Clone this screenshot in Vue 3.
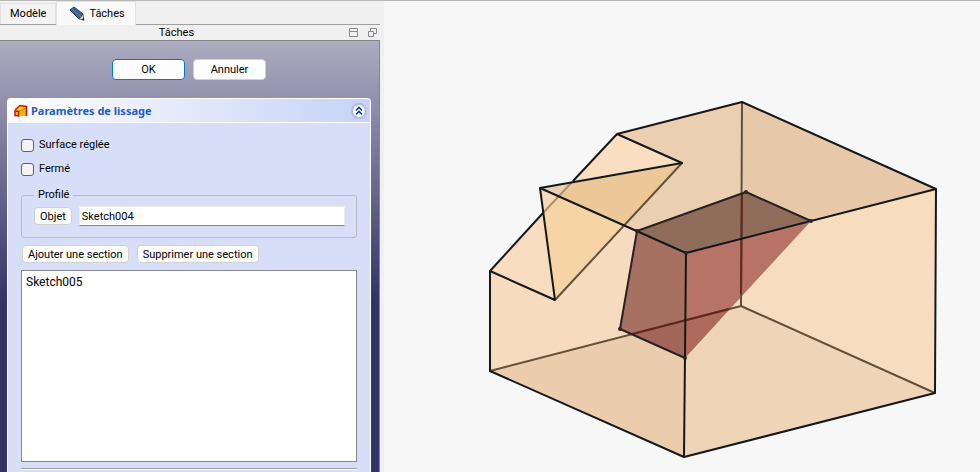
<script setup>
import { ref } from 'vue'

const ruled = ref(false)
const closed = ref(false)
const expanded = ref(true)
const profile = ref('Sketch004')
const sections = ref(['Sketch005'])

const faces = [
  { fill: '#f6dbbe', points: '490,271 555,300 682,163 686,253 684,457 490,371' },
  { fill: '#f6ddbf', points: '686,253 936,189 935,393 684,457' },
  { fill: '#ebcdae', points: '490,371 741,306 684,457' },
  { fill: '#efd5b7', points: '685,321 741,306 935,393 684,457' },
  { fill: '#f9dec1', points: '617,134 682,163 573,181' },
  { fill: '#ebcfb1', points: '617,134 742,102 741,239 686,253 624,226 682,163' },
  { fill: '#e7c9aa', points: '742,102 936,189 741,239' },
  { fill: '#f7dcc0', points: '490,271 543,213 555,300' },
  { fill: '#ead1b3', points: '540,188 573,181 558,197' },
  { fill: '#f5dabc', points: '540,188 558,197 543,213' },
  { fill: '#ecc898', points: '573,181 682,163 624,226 558,197' },
  { fill: '#f6d4a6', points: '543,213 558,197 624,226 555,300' },
  { fill: '#906c5b', points: '637,231 746,192 811,221 686,253' },
  { fill: '#a67161', points: '637,231 686,253 685,358 620,329' },
  { fill: '#b67366', points: '686,253 811,221 685,358' },
  { fill: '#a36759', points: '632,334 685,321 685,358' },
  { fill: '#af6a5b', points: '685,321 729,309 685,358' }
]

const lines = [
  { kind: 'hidden', points: '490,371 741,306 935,393' },
  { kind: 'hidden', points: '742,102 741,306' },
  { kind: 'hidden', points: '555,300 682,163' },
  { kind: 'faint', points: '573,181 543,213' },
  { kind: 'inner', points: '632,334 729,309' },
  { kind: 'inner', points: '742,194 741,294' },
  { kind: 'sketch', points: '685,358 620,329 637,231 746,192 811,221' },
  { kind: 'edge', points: '573,181 617,134 742,102 936,189 935,393 684,457 490,371 490,271 543,213' },
  { kind: 'edge', points: '617,134 682,163 540,188 555,300 490,271' },
  { kind: 'edge', points: '540,188 686,253 936,189' },
  { kind: 'edge', points: '686,253 684,457' }
]

const nodes = [[637, 231], [746, 192], [811, 221], [685, 358], [620, 329], [686, 253]]

function addSection() {
  sections.value.push('Sketch00' + (5 + sections.value.length))
}
function removeSection() {
  sections.value.pop()
}
</script>

<template>
  <div class="window">
    <aside class="dock">
      <nav class="tabs">
        <button class="tab" type="button">Modèle</button>
        <button class="tab active" type="button">
          <svg class="pencil" viewBox="0 0 16 16" aria-hidden="true">
            <path d="M1 4 5 1 14 8 10 13Z" fill="#3a6496" stroke="#1f3552" />
            <path d="M3 3 12 10.500" stroke="#5f88b8" stroke-width="1" />
            <path d="M10 13 14 8.500 15 14Z" fill="#d9d2c6" stroke="#34404d" stroke-width=".7" />
            <path d="M12.500 14 15 11.500 15 14.500Z" fill="#182436" />
          </svg>
          <span>Tâches</span>
        </button>
      </nav>
      <header class="title">
        <span class="title-text">Tâches</span>
        <button class="tool" type="button" aria-label="Ancrer">
          <svg viewBox="0 0 9 9"><path d="M.5 .5h8v8h-8zM.5 3.500h8" /></svg>
        </button>
        <button class="tool" type="button" aria-label="Détacher">
          <svg viewBox="0 0 9 9"><path d="M.5 3.500h5v5h-5zM2.500 3V.5h6v5H6" /></svg>
        </button>
      </header>

      <main class="tasks">
        <div class="actions">
          <button class="btn primary" type="button">OK</button>
          <button class="btn" type="button">Annuler</button>
        </div>

        <section class="panel">
          <header class="panel-head">
            <svg class="loft" viewBox="0 0 14 14" aria-hidden="true">
              <path d="M1 6 6 1.500 13 2.500V12L5 12.500 1 11Z" fill="#f3d21a" />
              <path d="M5 7 12 4.500V11.500L5 12Z" fill="#e3b90c" />
              <path d="M1 6 6 1.500 12.500 2.500V12" fill="none" stroke="#d4141c" stroke-width="1.500" />
              <path d="M5 7 12 4.500" stroke="#8c6a00" stroke-width=".6" />
              <path d="M1 7 4.500 7.500V12L1 11.500Z" fill="#f3c60d" stroke="#c4141c" stroke-width="1.500" />
            </svg>
            <h2>Paramètres de lissage</h2>
            <button class="fold" type="button" aria-label="Replier" @click="expanded = !expanded">
              <svg viewBox="0 0 16 16">
                <circle cx="8" cy="8" r="7" fill="#fff" stroke="#b3bbdc" stroke-width="2" />
                <path d="M5 7.500 8 4.500 11 7.500M5 11.500 8 8.500 11 11.500" fill="none" stroke="#0a3aa8" stroke-width="1.600" />
              </svg>
            </button>
          </header>

          <div v-if="expanded" class="panel-body">
            <label class="check"><input v-model="ruled" type="checkbox" />Surface réglée</label>
            <label class="check"><input v-model="closed" type="checkbox" />Fermé</label>

            <fieldset class="profile">
              <legend>Profilé</legend>
              <button class="btn small" type="button">Objet</button>
              <input v-model="profile" class="field" type="text" aria-label="Profilé" />
            </fieldset>

            <div class="section-actions">
              <button class="btn small" type="button" @click="addSection">Ajouter une section</button>
              <button class="btn small" type="button" @click="removeSection">Supprimer une section</button>
            </div>

            <ul class="list">
              <li v-for="s in sections" :key="s">{{ s }}</li>
            </ul>
            <hr />
          </div>
        </section>
      </main>
    </aside>

    <div class="view">
      <svg class="scene" viewBox="384 1 596 471" role="img" aria-label="Vue 3D">
        <polygon v-for="(f, i) in faces" :key="'f' + i" :points="f.points" :fill="f.fill" />
        <polyline v-for="(l, i) in lines" :key="'l' + i" :points="l.points" :class="['line', l.kind]" />
        <circle v-for="(n, i) in nodes" :key="'n' + i" :cx="n[0]" :cy="n[1]" r="2" fill="#23262b" />
      </svg>
    </div>
  </div>
</template>

<style>
body {
  margin: 0;
  background: #f0f0f0;
}
</style>

<style scoped>
.window {
  box-sizing: border-box;
  display: flex;
  min-height: 100vh;
  border-top: 1px solid #b8b8b8;
  font: 11px/16px Roboto, "Open Sans", sans-serif;
  color: #000;
}
.window * {
  box-sizing: border-box;
}
button,
input {
  font: inherit;
  color: inherit;
  margin: 0;
}
.dock {
  display: flex;
  flex-direction: column;
  flex: 0 0 384px;
  padding-right: 4px;
  background: #f0f0f0;
}
.tabs {
  display: flex;
  align-items: flex-end;
  height: 24px;
  border-bottom: 1px solid #a0a0a0;
}
.tab {
  display: flex;
  align-items: center;
  height: 21px;
  padding: 0 9px;
  border: 1px solid #e2e2e2;
  border-bottom: 0;
  background: #f3f3f3;
}
.tab.active {
  gap: 4px;
  height: 24px;
  margin-bottom: -1px;
  padding: 0 10px 0 12px;
  background: #f9f9f9;
}
.pencil {
  width: 16px;
  height: 16px;
}
.title {
  display: flex;
  align-items: center;
  gap: 10px;
  height: 16px;
  padding-right: 3px;
  border-bottom: 1px solid #84848c;
}
.title-text {
  flex: 1;
  padding-left: 14px;
  text-align: center;
}
.tool {
  display: flex;
  padding: 0;
  border: 0;
  background: none;
}
.tool svg {
  width: 9px;
  height: 9px;
  fill: none;
  stroke: #8a8a8a;
}
.tasks {
  display: flex;
  flex-direction: column;
  flex: 1;
  padding: 18px 8px 0 7px;
  border-right: 1px solid #84848c;
  background: linear-gradient(#acacc0 0, #8c8aa8 72px, #333366 260px);
}
.actions {
  display: flex;
  justify-content: center;
  gap: 8px;
  margin-bottom: 18px;
}
.btn {
  width: 73px;
  height: 21px;
  padding: 1px 0 0;
  border: 1px solid #d0d0d0;
  border-radius: 4px;
  background: #fdfdfd;
}
.btn.primary {
  border-color: #0078d4;
}
.btn.small {
  width: auto;
  height: 18px;
  padding: 1px 5px 0;
  line-height: 15px;
}
.panel {
  display: flex;
  flex-direction: column;
  flex: 1;
  border: 1px solid #fff;
  border-bottom: 0;
  border-radius: 4px 4px 0 0;
  background: #d6dff7;
}
.panel-head {
  display: flex;
  align-items: center;
  height: 24px;
  padding: 0 3px 0 6px;
  border-bottom: 1px solid #fff;
  border-radius: 3px 3px 0 0;
  background: linear-gradient(to right, #fff, #c6d3f7);
}
.loft {
  width: 14px;
  height: 14px;
}
h2 {
  flex: 1;
  margin: 0 0 0 3px;
  font: bold 11px/15px "Noto Sans", sans-serif;
  color: #215dc6;
}
.fold {
  display: flex;
  padding: 0;
  border: 0;
  background: none;
}
.fold svg {
  width: 16px;
  height: 16px;
}
.panel-body {
  display: flex;
  flex-direction: column;
  flex: 1;
  padding: 14px 13px 2px;
}
.check {
  display: flex;
  align-items: center;
  gap: 5px;
  height: 16px;
  margin-bottom: 8px;
}
.check input {
  appearance: none;
  width: 13px;
  height: 13px;
  border: 1px solid #626262;
  border-radius: 3px;
  background: #f3f3f3;
}
.check input:checked {
  background: #0078d4;
}
.profile {
  display: flex;
  align-items: center;
  gap: 7px;
  min-width: 0;
  margin: 2px 0 7px;
  padding: 3px 11px 11px 12px;
  border: 1px solid #bcbcbc;
  border-radius: 3px;
}
legend {
  padding: 0 4px;
}
.field {
  flex: 1;
  min-width: 0;
  height: 20px;
  padding: 1px 2px 0;
  border: 1px solid #ececec;
  border-bottom-color: #868686;
  background: #fff;
}
.section-actions {
  display: flex;
  gap: 8px;
  margin-bottom: 7px;
  padding-left: 1px;
}
.list {
  flex: 1;
  min-height: 60px;
  margin: 0;
  padding: 3px 4px;
  border: 1px solid #828790;
  background: #fff;
  list-style: none;
  font-size: 12px;
  line-height: 16px;
}
hr {
  width: 100%;
  height: 2px;
  margin: 6px 0 0;
  border: 0;
  border-top: 1px solid #a0a0a0;
  background: #fff;
}
.view {
  display: flex;
  flex: 1;
  min-width: 0;
  background: #f7f7f7;
}
.scene {
  width: 100%;
}
.line {
  fill: none;
  stroke-width: 2;
  stroke-linejoin: round;
}
.edge {
  stroke: #15181a;
}
.hidden {
  stroke: #625039;
}
.faint {
  stroke: #ab9070;
}
.inner {
  stroke: #612720;
}
.sketch {
  stroke: #2a2024;
}
</style>
